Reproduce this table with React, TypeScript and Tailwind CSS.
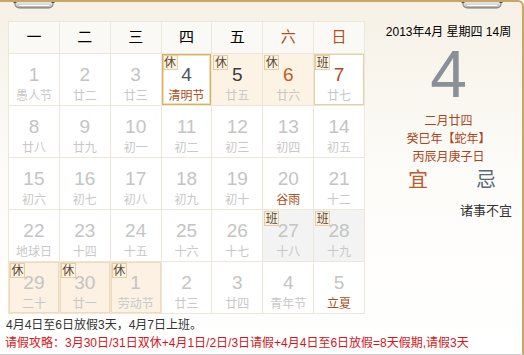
import React from "react";

type Cell = {
  n: number;
  l: string;
  badge?: "休" | "班";
  kind?: "today" | "rest" | "work" | "gray" | "restRow";
  numColor?: string;
  lunarColor?: string;
};

const GRAY = "text-[#c4c4c4]";
const BROWN = "text-[#ad4e1a]";

const rows: Cell[][] = [
  [
    { n: 1, l: "愚人节" },
    { n: 2, l: "廿二" },
    { n: 3, l: "廿三" },
    { n: 4, l: "清明节", badge: "休", kind: "today", numColor: "text-[#4a5366]", lunarColor: BROWN },
    { n: 5, l: "廿五", badge: "休", kind: "rest", numColor: "text-[#3d3d3d]" },
    { n: 6, l: "廿六", badge: "休", kind: "rest", numColor: "text-[#c65a28]" },
    { n: 7, l: "廿七", badge: "班", kind: "work", numColor: "text-[#b4461c]" },
  ],
  [
    { n: 8, l: "廿八" },
    { n: 9, l: "廿九" },
    { n: 10, l: "初一" },
    { n: 11, l: "初二" },
    { n: 12, l: "初三" },
    { n: 13, l: "初四" },
    { n: 14, l: "初五" },
  ],
  [
    { n: 15, l: "初六" },
    { n: 16, l: "初七" },
    { n: 17, l: "初八" },
    { n: 18, l: "初九" },
    { n: 19, l: "初十" },
    { n: 20, l: "谷雨", lunarColor: BROWN },
    { n: 21, l: "十二" },
  ],
  [
    { n: 22, l: "地球日" },
    { n: 23, l: "十四" },
    { n: 24, l: "十五" },
    { n: 25, l: "十六" },
    { n: 26, l: "十七" },
    { n: 27, l: "十八", badge: "班", kind: "gray" },
    { n: 28, l: "十九", badge: "班", kind: "gray" },
  ],
  [
    { n: 29, l: "二十", badge: "休", kind: "restRow" },
    { n: 30, l: "廿一", badge: "休", kind: "restRow" },
    { n: 1, l: "劳动节", badge: "休", kind: "restRow" },
    { n: 2, l: "廿三" },
    { n: 3, l: "廿四" },
    { n: 4, l: "青年节" },
    { n: 5, l: "立夏", lunarColor: BROWN },
  ],
];

const heads = ["一", "二", "三", "四", "五", "六", "日"];

function kindClass(k?: Cell["kind"]) {
  switch (k) {
    case "today":
      return "bg-white shadow-[inset_0_0_0_1px_#d9b15c,inset_0_0_0_2px_#f3dfae]";
    case "rest":
      return "bg-[#fdf3e4]";
    case "work":
      return "bg-white shadow-[inset_0_0_0_1px_#e4d0a0]";
    case "gray":
      return "bg-[#f3f3f3]";
    case "restRow":
      return "bg-[#fcf1e2] shadow-[inset_0_0_0_1px_#f0dbb6]";
    default:
      return "bg-white";
  }
}

function Ring() {
  return (
    <svg width="42" height="10" viewBox="0 0 42 10">
      <defs>
        <linearGradient id="rg" x1="0" y1="0" x2="0" y2="1">
          <stop offset="0" stopColor="#f4f4f4" />
          <stop offset="0.6" stopColor="#d6d6d6" />
          <stop offset="1" stopColor="#a0a0a0" />
        </linearGradient>
      </defs>
      <path d="M2 0 L40 0 L40 4 Q40 8 35 8 L7 8 Q2 8 2 4 Z" fill="url(#rg)" stroke="#7a7a7a" strokeWidth="1" />
      <path d="M6 5.5 L36 5.5" stroke="#ffffff" strokeWidth="1" />
      <rect x="0.5" y="0" width="3" height="3" fill="#5a4a30" />
      <rect x="38.5" y="0" width="3" height="3" fill="#5a4a30" />
    </svg>
  );
}

export default function App() {
  return (
    <div
      className="relative w-[524px] h-[355px] overflow-hidden bg-gradient-to-b from-[#f6f1e6] via-[#fdfcf9] to-white border-t-2 border-r-2 border-[#c9a566] rounded-tr-[6px] border-b border-b-[#cfcfcf]"
      style={{ fontFamily: '"Liberation Sans","Noto Sans CJK SC",sans-serif' }}
    >
      <div className="absolute left-[13px] top-[-2px]">
        <Ring />
      </div>
      <div className="absolute left-[461px] top-[-2px]">
        <Ring />
      </div>

      <div className="flex">
        {/* calendar grid */}
        <div className="pl-[8px] pt-[19px]">
          <div className="w-[357px] border-l border-t border-[#ece6db] grid grid-cols-7">
            {heads.map((h, i) => (
              <div
                key={h}
                className={`h-[32px] flex items-center justify-center border-r border-b border-[#ece6db] bg-[#fbf9f5] text-[15px] ${
                  i >= 5 ? "text-[#b0501c]" : "text-black"
                }`}
              >
                {h}
              </div>
            ))}
            {rows.flat().map((c, i) => (
              <div
                key={i}
                className={`relative h-[52px] border-r border-b border-[#ece6db] flex flex-col items-center ${kindClass(c.kind)}`}
              >
                {c.badge && (
                  <div className="absolute left-[1px] top-[1px] w-[15px] h-[15px] bg-[#fbf2e2] border border-[#e3cfa6] flex items-center justify-center text-[12px] leading-none text-[#5a4630]">
                    {c.badge}
                  </div>
                )}
                <div className={`mt-[10px] text-[19px] leading-[22px] ${c.numColor ?? GRAY}`}>{c.n}</div>
                <div className={`mt-[2px] text-[12px] leading-[16px] ${c.lunarColor ?? "text-[#c8c8c8]"}`}>{c.l}</div>
              </div>
            ))}
          </div>
        </div>

        {/* right panel */}
        <div className="flex-1 flex flex-col items-center pl-[10px]">
          <div className="mt-[22px] text-[12px] leading-[16px] text-black whitespace-nowrap">
            2013年4月 星期四 14周
          </div>
          <div className="mt-[1px] text-[66px] leading-[66px] text-[#8a9097]">4</div>
          <div className="mt-[5px] flex flex-col items-center text-[12px] leading-[18px] text-[#a9461c]">
            <div>二月廿四</div>
            <div>癸巳年【蛇年】</div>
            <div>丙辰月庚子日</div>
          </div>
          <div className="w-full flex leading-[28px] text-[20px]">
            <div className="ml-[33px] w-[20px] text-center text-[#c0582a]">宜</div>
            <div className="ml-[48px] w-[20px] text-center text-[#5a6878]">忌</div>
          </div>
          <div className="self-end mr-[10px] mt-[9px] text-[13px] leading-[16px] text-[#333]">诸事不宜</div>
        </div>
      </div>

      <div className="pl-[6px] mt-[2px] text-[12px] leading-[18px] text-[#333] whitespace-nowrap">
        4月4日至6日放假3天，4月7日上班。
      </div>
      <div className="pl-[5px] text-[12px] leading-[18px] text-[#d4161c] whitespace-nowrap">
        请假攻略：3月30日/31日双休+4月1日/2日/3日请假+4月4日至6日放假=8天假期,请假3天
      </div>
    </div>
  );
}
